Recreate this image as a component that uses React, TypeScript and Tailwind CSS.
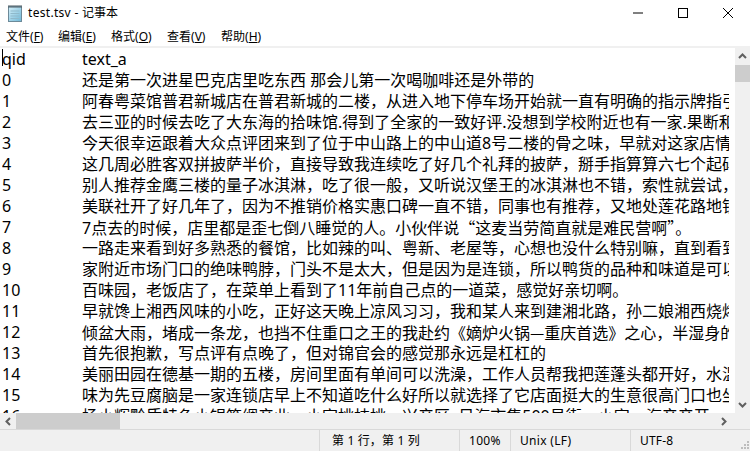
import type { ReactNode } from "react";

const cjk = "font-['Noto_Sans_CJK_SC',sans-serif]";

const lines: [string, ReactNode][] = [
  ["qid", "text_a"],
  ["0", "还是第一次进星巴克店里吃东西 那会儿第一次喝咖啡还是外带的"],
  ["1", "阿春粤菜馆普君新城店在普君新城的二楼，从进入地下停车场开始就一直有明确的指示牌指引"],
  ["2", "去三亚的时候去吃了大东海的拾味馆.得到了全家的一致好评.没想到学校附近也有一家.果断和"],
  ["3", "今天很幸运跟着大众点评团来到了位于中山路上的中山道8号二楼的骨之味，早就对这家店情"],
  ["4", "这几周必胜客双拼披萨半价，直接导致我连续吃了好几个礼拜的披萨，掰手指算算六七个起码"],
  ["5", "别人推荐金鹰三楼的量子冰淇淋，吃了很一般，又听说汉堡王的冰淇淋也不错，索性就尝试，"],
  ["6", "美联社开了好几年了，因为不推销价格实惠口碑一直不错，同事也有推荐，又地处莲花路地铁"],
  ["7", <>7点去的时候，店里都是歪七倒八睡觉的人。小伙伴说<span className={cjk}>“</span>这麦当劳简直就是难民营啊<span className={cjk}>”</span>。</>],
  ["8", "一路走来看到好多熟悉的餐馆，比如辣的叫、粤新、老屋等，心想也没什么特别嘛，直到看到"],
  ["9", "家附近市场门口的绝味鸭脖，门头不是太大，但是因为是连锁，所以鸭货的品种和味道是可以"],
  ["10", "百味园，老饭店了，在菜单上看到了11年前自己点的一道菜，感觉好亲切啊。"],
  ["11", "早就馋上湘西风味的小吃，正好这天晚上凉风习习，我和某人来到建湘北路，孙二娘湘西烧烤"],
  ["12", <>倾盆大雨，堵成一条龙，也挡不住重口之王的我赴约《嫡炉火锅<span className={cjk}>—</span>重庆首选》之心，半湿身的</>],
  ["13", "首先很抱歉，写点评有点晚了，但对锦官会的感觉那永远是杠杠的"],
  ["14", "美丽田园在德基一期的五楼，房间里面有单间可以洗澡，工作人员帮我把莲蓬头都开好，水温"],
  ["15", "味为先豆腐脑是一家连锁店早上不知道吃什么好所以就选择了它店面挺大的生意很高门口也坐"],
  ["16", "杨小辉黔质特色小锅筋绸产业，小家桃枝桃，兴产区\u00a0\u00a0日海市集500号街，小家，汽产产开"],
];

function NotepadIcon() {
  return (
    <svg width="16" height="18" viewBox="0 0 16 18" className="shrink-0">
      <defs>
        <linearGradient id="np" x1="0" y1="0" x2="1" y2="1">
          <stop offset="0" stopColor="#d6f1fb" />
          <stop offset="1" stopColor="#6fb7d6" />
        </linearGradient>
      </defs>
      <rect x="1.5" y="2.5" width="13" height="15" fill="url(#np)" stroke="#6d8a99" />
      <path d="M2 1v3M4 1v3M6 1v3M8 1v3M10 1v3M12 1v3M14 1v3" stroke="#4d5b63" strokeWidth="1" />
      <path d="M3.5 7h9M3.5 9.5h9M3.5 12h9M3.5 14.5h9" stroke="#8fb9cb" strokeWidth="1" />
    </svg>
  );
}

function Chevron({ d, className }: { d: string; className?: string }) {
  return (
    <svg width="9" height="9" viewBox="0 0 9 9" className={className}>
      <path d={d} fill="none" stroke="#606060" strokeWidth="2" />
    </svg>
  );
}

function MenuItem({ label, k, w }: { label: string; k: string; w: string }) {
  return (
    <span className={w}>
      {label}(<span className="underline underline-offset-1">{k}</span>)
    </span>
  );
}

export default function App() {
  const font = "font-['Noto_Sans','Noto_Sans_CJK_SC',sans-serif]";
  return (
    <div className={`w-[750px] h-[451px] bg-white flex flex-col overflow-hidden text-black ${font}`}>
      <div className="h-[25px] shrink-0 flex items-center">
        <div className="pl-[7px] pr-[5px] flex"><NotepadIcon /></div>
        <span className="text-[12px] leading-[25px]"><span className="tracking-[0.3px]">test.tsv - </span>记事本</span>
        <div className="ml-auto flex items-center pr-[17px] gap-[35px]">
          <svg width="10" height="10" viewBox="0 0 10 10"><path d="M0 5h10" stroke="#000" /></svg>
          <svg width="10" height="10" viewBox="0 0 10 10"><rect x=".5" y=".5" width="9" height="9" fill="none" stroke="#000" /></svg>
          <svg width="10" height="10" viewBox="0 0 10 10"><path d="M0 0l10 10M10 0L0 10" stroke="#000" /></svg>
        </div>
      </div>
      <div className="h-[21px] shrink-0 flex items-center pl-[6px] pt-[2px] text-[12px] leading-[19px]">
        <MenuItem label="文件" k="F" w="w-[52px]" />
        <MenuItem label="编辑" k="E" w="w-[53px]" />
        <MenuItem label="格式" k="O" w="w-[56px]" />
        <MenuItem label="查看" k="V" w="w-[54px]" />
        <MenuItem label="帮助" k="H" w="" />
      </div>
      <div className="h-[2px] shrink-0 bg-[#f0f0f0]" />
      <div className="flex-1 min-h-0 flex">
        <div className="flex-1 min-w-0 relative pl-[2px] pr-[6px] pt-px overflow-hidden">
          <div className="absolute left-[2px] top-px w-px h-[17px] bg-black" />
          <div className="overflow-hidden h-[364px]">
            {lines.map(([id, text]) => (
              <div key={id} className="flex h-[21px] text-[16px] leading-[21px] whitespace-nowrap">
                <span className="w-[80px] shrink-0">{id}</span>
                <span>{text}</span>
              </div>
            ))}
          </div>
        </div>
        <div className="w-[15px] shrink-0 bg-[#f0f0f0] flex flex-col items-center">
          <div className="h-[17px] flex items-center justify-center"><Chevron d="M1 6l3.5-3.5L8 6" /></div>
          <div className="w-full h-[17px] bg-[#cdcdcd]" />
          <div className="mt-auto h-[17px] flex items-center justify-center"><Chevron d="M1 3l3.5 3.5L8 3" /></div>
        </div>
      </div>
      <div className="h-[16px] shrink-0 bg-[#f0f0f0] flex">
        <div className="w-[16px] flex items-center justify-center"><Chevron d="M6 1L2.5 4.5 6 8" /></div>
        <div className="w-[104px] bg-[#cdcdcd]" />
        <div className="ml-auto w-[32px] pl-[1px] flex items-center"><Chevron d="M3 1l3.5 3.5L3 8" /></div>
      </div>
      <div className="h-[22px] shrink-0 bg-[#f0f0f0] border-t border-[#d9d9d9] flex text-[12px] leading-[21px] relative">
        <div className="w-[320px] border-r border-[#d9d9d9]" />
        <div className="w-[140px] border-r border-[#d9d9d9] pl-[12px] tracking-[0.15px]">第 1 行，第 1 列</div>
        <div className="w-[51px] border-r border-[#d9d9d9] pl-[9px] tracking-[0.3px]">100%</div>
        <div className="w-[120px] border-r border-[#d9d9d9] pl-[9px] tracking-[0.3px]">Unix (LF)</div>
        <div className="pl-[9px] tracking-[0.2px]">UTF-8</div>
        <svg width="11" height="11" viewBox="0 0 11 11" className="absolute right-0 bottom-0">
          <path d="M8 1h2v2H8zM5 4h2v2H5zM8 4h2v2H8zM2 7h2v2H2zM5 7h2v2H5zM8 7h2v2H8z" fill="#bdbdbd" />
        </svg>
      </div>
    </div>
  );
}
